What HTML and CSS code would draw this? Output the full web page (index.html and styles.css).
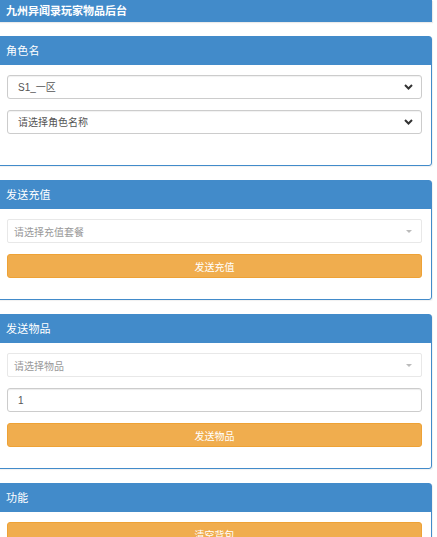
FILE: index.html
```html
<!DOCTYPE html>
<html lang="zh-CN">
<head>
<meta charset="utf-8">
<title>九州异闻录玩家物品后台</title>
<link rel="stylesheet" href="styles.css">
</head>
<body>
<div class="page">
  <div class="topbar">九州异闻录玩家物品后台</div>

  <section class="panel">
    <div class="panel-heading">角色名</div>
    <div class="panel-body panel-body--tall">
      <div class="select-wrap">
        <select class="native-select"><option>S1_一区</option></select>
        <svg class="chev" width="9" height="6" viewBox="0 0 9 6"><path d="M1 1l3.5 3.5L8 1" fill="none" stroke="#333" stroke-width="2"/></svg>
      </div>
      <div class="select-wrap">
        <select class="native-select"><option>请选择角色名称</option></select>
        <svg class="chev" width="9" height="6" viewBox="0 0 9 6"><path d="M1 1l3.5 3.5L8 1" fill="none" stroke="#333" stroke-width="2"/></svg>
      </div>
    </div>
  </section>

  <section class="panel">
    <div class="panel-heading">发送充值</div>
    <div class="panel-body">
      <div class="s2">
        <span class="s2-text">请选择充值套餐</span>
        <span class="s2-arrow"></span>
      </div>
      <button class="btn">发送充值</button>
    </div>
  </section>

  <section class="panel">
    <div class="panel-heading">发送物品</div>
    <div class="panel-body">
      <div class="s2">
        <span class="s2-text">请选择物品</span>
        <span class="s2-arrow"></span>
      </div>
      <input class="input" type="text" value="1">
      <button class="btn">发送物品</button>
    </div>
  </section>

  <section class="panel">
    <div class="panel-heading">功能</div>
    <div class="panel-body">
      <button class="btn">清空背包</button>
    </div>
  </section>
</div>
</body>
</html>
```
FILE: styles.css
```css
html, body {
  margin: 0;
  padding: 0;
  background: #fff;
  overflow: hidden;
}
body {
  font-family: "Liberation Sans", "Noto Sans CJK SC", sans-serif;
  color: #333;
}
.page {
  margin-left: -3px;
  width: 435px;
  display: flex;
  flex-direction: column;
  gap: 14px;
}
.topbar {
  height: 22px;
  line-height: 22px;
  background: #428bca;
  color: #fff;
  font-size: 11px;
  font-weight: bold;
  padding-left: 9px;
  box-shadow: 1px 1px 1px rgba(0, 0, 0, 0.08);
}
.panel {
  border: 1px solid #428bca;
  border-radius: 3px;
  background: #fff;
  box-shadow: 1px 1px 1px rgba(0, 0, 0, 0.06);
}
.panel-heading {
  height: 28px;
  line-height: 28px;
  background: #428bca;
  color: #fff;
  font-size: 11px;
  padding: 0 8px;
  letter-spacing: 0.2px;
}
.panel-body {
  padding: 10px 9px 21px;
  display: flex;
  flex-direction: column;
  gap: 11px;
}
.panel-body--tall {
  padding-bottom: 31px;
}
.select-wrap {
  position: relative;
  height: 24px;
}
.native-select {
  appearance: none;
  -webkit-appearance: none;
  width: 100%;
  height: 24px;
  margin: 0;
  border: 1px solid #ccc;
  border-radius: 3px;
  background: #fff;
  color: #555;
  font-family: "Liberation Sans", "Noto Sans CJK SC", sans-serif;
  font-size: 10px;
  padding: 0 0 0 10px;
  box-shadow: inset 0 1px 1px rgba(0, 0, 0, 0.06);
  display: block;
}
.chev {
  position: absolute;
  right: 9px;
  top: 9px;
  pointer-events: none;
}
.s2 {
  height: 24px;
  box-sizing: border-box;
  border: 1px solid #e8e8e8;
  border-radius: 2px;
  display: flex;
  align-items: center;
  justify-content: space-between;
  padding: 0 9px 0 6px;
  background: #fff;
}
.s2-text {
  color: #999;
  font-size: 10px;
}
.s2-arrow {
  width: 0;
  height: 0;
  border-left: 3px solid transparent;
  border-right: 3px solid transparent;
  border-top: 3px solid #bbb;
  margin-top: 1px;
}
.input {
  height: 24px;
  box-sizing: border-box;
  margin: 0;
  border: 1px solid #ccc;
  border-radius: 3px;
  padding: 0 10px;
  font-family: "Liberation Sans", "Noto Sans CJK SC", sans-serif;
  font-size: 10px;
  color: #555;
  box-shadow: inset 0 1px 1px rgba(0, 0, 0, 0.075);
}
.btn {
  height: 24px;
  margin: 0;
  border: 1px solid #eea236;
  border-radius: 3px;
  background: #f0ad4e;
  color: #fff;
  font-family: "Liberation Sans", "Noto Sans CJK SC", sans-serif;
  font-size: 10px;
  padding: 0;
}
```
